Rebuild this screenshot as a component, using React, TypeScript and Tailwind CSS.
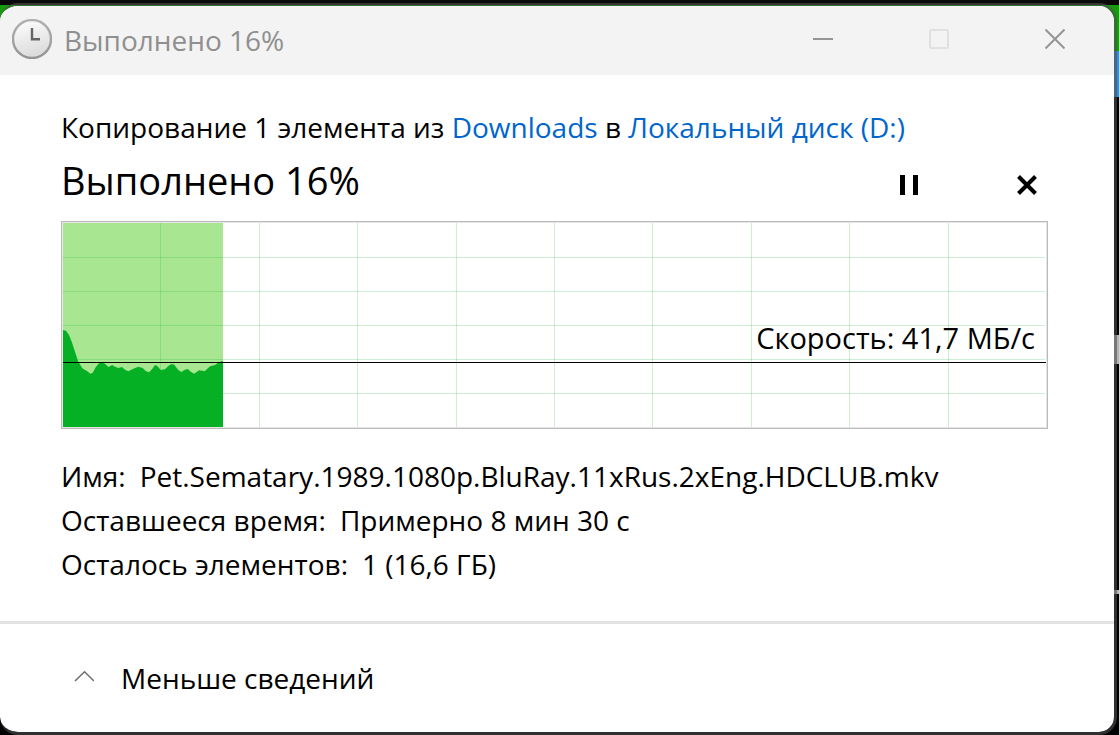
import React from 'react';

// speed samples: [x, y] inside the 985x206 chart
const samples = [
  [1, 108], [4, 108.7], [7, 113], [9.7, 119.7], [13, 129.7], [16, 139], [20.3, 146.3], [25.3, 149.3],
  [28.3, 151.7], [30.7, 150.7], [33.7, 145.3], [37, 141.3], [40.3, 140.7], [43.3, 142], [46.3, 145],
  [50.3, 143], [53, 144.7], [56.3, 146], [60, 145], [63, 147.7], [66.3, 149.3], [71.3, 146.7],
  [76.3, 144.7], [80.7, 146], [83.7, 149], [87, 150.3], [90, 147.3], [93, 143], [95.3, 144],
  [98.7, 148], [103, 147.3], [106.3, 144], [109.3, 142], [112.3, 142.7], [116, 147.7], [119.3, 150],
  [123, 147.7], [125.7, 147], [128.7, 149.7], [132, 151.7], [137.3, 148.3], [142.7, 149.3],
  [148, 144.3], [153, 143], [157, 140.3], [161, 138.7],
];

const columns = [98, 197, 295, 394, 492, 590, 689, 787, 886];
const rows = [35, 69, 103, 137, 171];

const details = [
  { label: 'Имя:', value: 'Pet.Sematary.1989.1080p.BluRay.11xRus.2xEng.HDCLUB.mkv' },
  { label: 'Оставшееся время:', value: 'Примерно 8 мин 30 с' },
  { label: 'Осталось элементов:', value: '1 (16,6 ГБ)' },
];

function ClockIcon() {
  return (
    <svg className="h-10 w-10 shrink-0" viewBox="0 0 40 40" fill="none" aria-hidden="true">
      <defs>
        <linearGradient id="face" x1="0" y1="0" x2="0.3" y2="1">
          <stop offset="0" stopColor="#ffffff" />
          <stop offset="1" stopColor="#dcdcdc" />
        </linearGradient>
        <linearGradient id="rim" x1="0" y1="0" x2="0" y2="1">
          <stop offset="0" stopColor="#b2b2b2" />
          <stop offset="1" stopColor="#939393" />
        </linearGradient>
      </defs>
      <circle cx="20" cy="20" r="19" fill="url(#face)" stroke="url(#rim)" strokeWidth="2.4" />
      <path d="M20 9V20.2H28" stroke="#666" strokeWidth="2.4" />
    </svg>
  );
}

function TitleBar() {
  const button = 'flex h-full w-[116px] items-center justify-center';
  return (
    <header className="flex h-[69px] items-center bg-[#f3f3f3] pb-1 pl-3 pr-px">
      <ClockIcon />
      <span className="ml-3 grow pt-[2px] text-[28px] leading-9 text-[#8f8f8f]">Выполнено 16%</span>
      <button className={button} aria-label="Свернуть">
        <svg className="h-5 w-5" viewBox="0 0 20 20" aria-hidden="true">
          <rect y="9" width="20" height="2" fill="#959595" />
        </svg>
      </button>
      <button className={button} aria-label="Развернуть" disabled>
        <svg className="h-5 w-5" viewBox="0 0 20 20" aria-hidden="true">
          <rect x="1" y="1" width="18" height="18" rx="1.5" fill="none" stroke="#e0e0e0" strokeWidth="2" />
        </svg>
      </button>
      <button className={button} aria-label="Закрыть">
        <svg className="h-5 w-5" viewBox="0 0 20 20" aria-hidden="true">
          <path d="M0.5 0.5L19.5 19.5M19.5 0.5L0.5 19.5" stroke="#959595" strokeWidth="2" />
        </svg>
      </button>
    </header>
  );
}

function SpeedChart() {
  const area = `M1 205L${samples.map((p) => p.join(' ')).join('L')}V205Z`;
  return (
    <div className="relative border border-[#bababa]">
      <svg className="block h-[206px] w-full" viewBox="0 0 985 206" preserveAspectRatio="none" aria-hidden="true">
        <rect x="0.5" y="0.5" width="984" height="205" fill="#fff" stroke="#e6e6e6" />
        <rect x="1" y="1" width="160" height="204" fill="#a8e691" />
        <g fill="#06b025" fillOpacity="0.2">
          {columns.map((x) => <rect key={x} x={x} y="1" width="1" height="204" />)}
          {rows.map((y) => <rect key={y} x="1" y={y} width="982" height="1" />)}
        </g>
        <path d={area} fill="#06b025" />
        <rect x="1" y="140" width="983" height="1" fill="#000" />
      </svg>
      <p className="absolute right-3 top-24 text-[29px] leading-10">Скорость: 41,7 МБ/с</p>
    </div>
  );
}

export default function App() {
  return (
    <div className="relative min-h-screen bg-[#0a0a0a] pr-[2px] pt-[3px] font-['Open_Sans','Noto_Sans',sans-serif] text-black">
      {/* desktop showing past the window edge */}
      <div className="absolute inset-x-0 bottom-0 top-[5px] flex flex-col bg-black" aria-hidden="true">
        <div className="h-[46px] bg-[#169b0e]" />
        <div className="h-[46px] bg-[#3a8bd0]" />
        <div className="mt-[238px] h-[29px] bg-[#b4b4b4]" />
        <div className="mt-[226px] h-1 bg-[#b4b4b4]" />
      </div>

      <div className="relative overflow-hidden rounded-[18px] border-b-[3px] border-r-[3px] border-t-[3px] border-[#505050]/60 bg-white bg-clip-padding">
        <TitleBar />

        <main className="pl-[61px] pr-[66px] pt-[30px] pb-[35px]">
          <p className="text-[28px] leading-[44px]">
            Копирование 1 элемента из <a href="#downloads" className="text-[#0066cc]">Downloads</a> в{' '}
            <a href="#disk" className="text-[#0066cc]">Локальный диск (D:)</a>
          </p>

          <div className="mb-[10px] flex h-[62px] items-end pr-px">
            <h1 className="grow text-[38px] leading-[62px]">Выполнено 16%</h1>
            <button className="mb-[6px] flex h-10 w-10 items-center justify-center" aria-label="Приостановить">
              <svg className="h-5 w-5" viewBox="0 0 20 20" aria-hidden="true">
                <path d="M1 0H6V20H1ZM14 0H19V20H14Z" />
              </svg>
            </button>
            <button className="mb-[6px] ml-[78px] flex h-10 w-10 items-center justify-center" aria-label="Отмена">
              <svg className="h-5 w-5" viewBox="0 0 20 20" aria-hidden="true">
                <path d="M1.5 1.5L18.5 18.5M18.5 1.5L1.5 18.5" stroke="#000" strokeWidth="4" />
              </svg>
            </button>
          </div>

          <SpeedChart />

          <dl className="mt-[25px] text-[28px] leading-[44px]">
            {details.map((item) => (
              <div key={item.label} className="flex gap-[14px]">
                <dt>{item.label}</dt>
                <dd>{item.value}</dd>
              </div>
            ))}
          </dl>
        </main>

        <footer className="flex h-[111px] items-center border-t-[3px] border-[#e3e3e3] pl-[74px]">
          <button className="flex items-center gap-[27px] text-[28px] leading-[44px]">
            <svg className="h-5 w-5" viewBox="0 0 20 20" aria-hidden="true">
              <path d="M1 13L10.5 3.8L20 13" fill="none" stroke="#707070" strokeWidth="1.6" />
            </svg>
            Меньше сведений
          </button>
        </footer>
      </div>
    </div>
  );
}
